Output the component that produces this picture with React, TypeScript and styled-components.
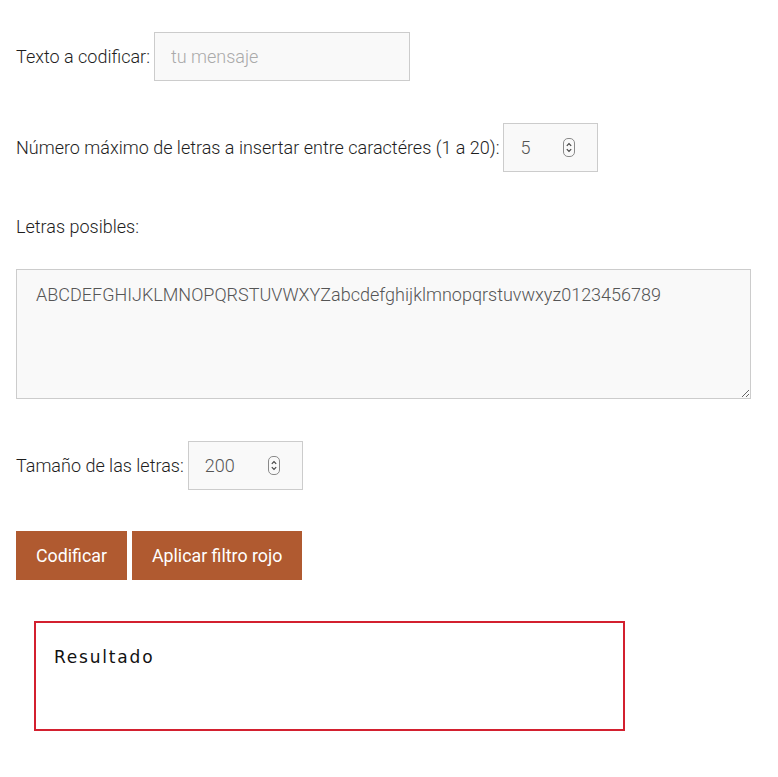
import styled, { createGlobalStyle } from "styled-components";

const GlobalStyle = createGlobalStyle`
  body {
    margin: 0;
    background: #fff;
    font-family: Roboto, "Liberation Sans", sans-serif;
    font-weight: 300;
    color: #222;
  }
`;

const Page = styled.div`
  padding: 32px 16px 40px;
  display: flex;
  flex-direction: column;
`;

const Row = styled.div<{ $gap?: number }>`
  display: flex;
  align-items: center;
  gap: 4px;
  margin-bottom: ${(p) => p.$gap ?? 42}px;
`;

const Label = styled.label`
  font-size: 18px;
  line-height: 20px;
  font-weight: 300;
  color: #1e1e1e;
`;

const BlockLabel = styled(Label)`
  display: block;
  margin-top: 3px;
  margin-bottom: 32px;
`;

const TextInput = styled.input`
  box-sizing: border-box;
  width: 256px;
  height: 49px;
  padding: 0 16px;
  border: 1px solid #ccc;
  background: #f9f9f9;
  font-family: inherit;
  font-weight: 300;
  font-size: 18px;
  color: #555;
  outline: none;
  &::placeholder {
    color: #aaa;
  }
`;

const NumberWrap = styled.div<{ $width: number }>`
  position: relative;
  width: ${(p) => p.$width}px;
`;

const NumberInput = styled(TextInput)`
  width: 100%;
  appearance: textfield;
  -moz-appearance: textfield;
  &::-webkit-inner-spin-button,
  &::-webkit-outer-spin-button {
    -webkit-appearance: none;
    margin: 0;
  }
`;

const Spinner = styled.svg`
  position: absolute;
  right: 23px;
  top: 15px;
  pointer-events: none;
`;

const TextArea = styled.textarea`
  box-sizing: border-box;
  width: 735px;
  height: 130px;
  padding: 13px 19px;
  border: 1px solid #ccc;
  background: #f9f9f9;
  font-family: inherit;
  font-weight: 300;
  font-size: 18px;
  line-height: 24px;
  color: #555;
  outline: none;
  margin: 0 0 42px;
  display: block;
`;

const Buttons = styled.div`
  display: flex;
  gap: 5px;
  margin-bottom: 41px;
`;

const Button = styled.button`
  height: 49px;
  padding: 0 20px;
  border: none;
  background: #b05a30;
  color: #fff;
  font-family: inherit;
  font-weight: 400;
  font-size: 17.8px;
  cursor: pointer;
`;

const ResultBox = styled.div`
  box-sizing: border-box;
  margin-left: 18px;
  width: 591px;
  height: 110px;
  border: 2px solid #d3202f;
  padding: 24px 18px;
`;

const ResultTitle = styled.h3`
  margin: 0;
  font-family: "DejaVu Sans", sans-serif;
  font-weight: normal;
  font-size: 17px;
  letter-spacing: 1.8px;
  color: #111;
`;

function SpinIcon() {
  return (
    <Spinner width="12" height="19" viewBox="0 0 12 19">
      <rect x="0.5" y="0.5" width="11" height="18" rx="4.5" fill="none" stroke="#8a8a8a" />
      <path d="M3.8 7.8 L6 5.6 L8.2 7.8" fill="none" stroke="#444" strokeWidth="1.2" />
      <path d="M3.8 11.2 L6 13.4 L8.2 11.2" fill="none" stroke="#444" strokeWidth="1.2" />
    </Spinner>
  );
}

export default function App() {
  return (
    <>
      <GlobalStyle />
      <Page>
        <Row>
          <Label htmlFor="txt">Texto a codificar:</Label>
          <TextInput id="txt" type="text" placeholder="tu mensaje" />
        </Row>
        <Row $gap={42}>
          <Label htmlFor="max">Número máximo de letras a insertar entre caractéres (1 a 20):</Label>
          <NumberWrap $width={95}>
            <NumberInput id="max" type="number" min={1} max={20} defaultValue={5} />
            <SpinIcon />
          </NumberWrap>
        </Row>
        <BlockLabel htmlFor="letras">Letras posibles:</BlockLabel>
        <TextArea
          id="letras"
          defaultValue="ABCDEFGHIJKLMNOPQRSTUVWXYZabcdefghijklmnopqrstuvwxyz0123456789"
        />
        <Row $gap={41}>
          <Label htmlFor="size">Tamaño de las letras:</Label>
          <NumberWrap $width={115}>
            <NumberInput id="size" type="number" defaultValue={200} />
            <SpinIcon />
          </NumberWrap>
        </Row>
        <Buttons>
          <Button>Codificar</Button>
          <Button>Aplicar filtro rojo</Button>
        </Buttons>
        <ResultBox>
          <ResultTitle>Resultado</ResultTitle>
        </ResultBox>
      </Page>
    </>
  );
}
